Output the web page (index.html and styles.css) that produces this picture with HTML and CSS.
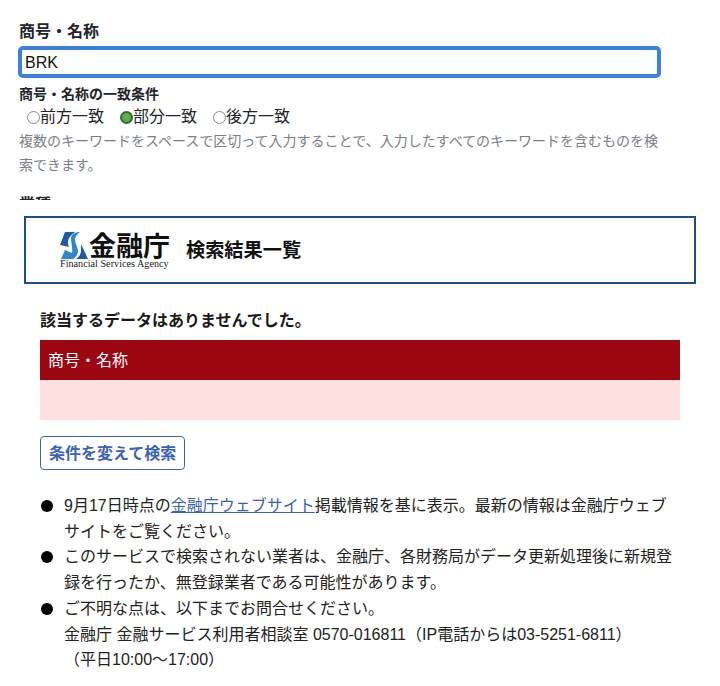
FILE: index.html
```html
<!DOCTYPE html>
<html lang="ja">
<head>
<meta charset="utf-8">
<title>検索結果一覧</title>
<link rel="stylesheet" href="styles.css">
</head>
<body>
<section class="search">
  <label class="field-label" for="name">商号・名称</label>
  <input class="field-input" id="name" type="text" value="BRK">
  <div class="match-label">商号・名称の一致条件</div>
  <div class="radios">
    <label class="radio"><input type="radio" name="m">前方一致</label>
    <label class="radio"><input type="radio" name="m" checked>部分一致</label>
    <label class="radio"><input type="radio" name="m">後方一致</label>
  </div>
  <p class="hint">複数のキーワードをスペースで区切って入力することで、入力したすべてのキーワードを含むものを検索できます。</p>
  <div class="next-label">業種</div>
</section>
<main class="results">
  <header class="brand">
    <div class="logo">
      <div class="logo-top">
        <svg class="mark" viewBox="0 0 28 27" aria-hidden="true">
          <path fill="#1d5aa8" d="M5 0H15C11 3 8 6 8 10C8 12 8.500 14 9 15L0 13Z"/>
          <path fill="#2f86c8" d="M11 6C11 3 14 1 18 0H20C16 3 15 6 15 8C15 12 18 15 18 19C18 22 16 25 13 27H1L5 18L12 21C13 17 11 11 11 6Z"/>
          <path fill="#1d5aa8" d="M21 12L28 27H16C19 25 21 22 21 19Z"/>
        </svg>
        <span class="logo-kanji">金融庁</span>
      </div>
      <div class="logo-en">Financial Services Agency</div>
    </div>
    <h1 class="title">検索結果一覧</h1>
  </header>
  <div class="body">
    <p class="notice">該当するデータはありませんでした。</p>
    <table class="table">
      <thead><tr><th>商号・名称</th></tr></thead>
      <tbody><tr><td></td></tr></tbody>
    </table>
    <button class="back" type="button">条件を変えて検索</button>
    <ul class="notes">
      <li><span>9月17日時点の<a href="#">金融庁ウェブサイト</a>掲載情報を基に表示。最新の情報は金融庁ウェブサイトをご覧ください。</span></li>
      <li><span>このサービスで検索されない業者は、金融庁、各財務局がデータ更新処理後に新規登録を行ったか、無登録業者である可能性があります。</span></li>
      <li><span>ご不明な点は、以下までお問合せください。<br>金融庁 金融サービス利用者相談室 0570-016811（IP電話からは03-5251-6811）<br>（平日10:00～17:00）</span></li>
    </ul>
  </div>
</main>
</body>
</html>
```
FILE: styles.css
```css
* { box-sizing: border-box; }
html, body { margin: 0; background: #fff; }
body {
  font-family: "Liberation Sans", "Noto Sans CJK JP", sans-serif;
  font-size: 16px;
  color: #1a1a1a;
}
.search {
  height: 200px;
  overflow: hidden;
  padding: 22px 60px 0 19px;
}
.field-label {
  display: block;
  font-weight: 700;
  line-height: 20px;
  color: #212529;
}
.field-input {
  display: block;
  width: 643px;
  height: 32px;
  margin: 4px 0 0 -1px;
  padding: 2px 3px 0;
  border: 4px solid #3b7fe3;
  border-radius: 5px;
  font: 16px "Liberation Sans", sans-serif;
  color: #111;
  outline: none;
}
.match-label {
  margin-top: 7px;
  font-size: 14px;
  font-weight: 700;
  line-height: 18px;
  color: #212529;
}
.radios {
  display: flex;
  gap: 16px;
  margin-top: 2px;
  padding-left: 8px;
  line-height: 24px;
}
.radio { display: flex; align-items: center; color: #212529; }
.radio input {
  appearance: none;
  width: 13px;
  height: 13px;
  margin: 0;
  border: 1px solid #8a8a8a;
  border-radius: 50%;
  background: #fff;
}
.radio input:checked {
  border: 2px solid #2e6b2e;
  background: #5cb04a;
}
.hint {
  margin: 0;
  font-size: 14px;
  line-height: 24px;
  color: #7a8087;
}
.next-label {
  margin-top: 18px;
  font-weight: 700;
  line-height: 20px;
  color: #212529;
}
.results { padding: 16px 24px 0; }
.brand {
  display: flex;
  align-items: center;
  height: 68px;
  padding-left: 34px;
  border: 2px solid #1f4e86;
}
.logo { width: 112px; }
.logo-top { display: flex; align-items: center; height: 28px; }
.mark { width: 28px; height: 27px; flex: none; }
.logo-kanji {
  margin-left: 1px;
  font-family: "Noto Sans CJK JP", sans-serif;
  font-size: 27px;
  font-weight: 700;
  line-height: 28px;
  color: #111;
  white-space: nowrap;
}
.logo-en {
  font-family: "Liberation Serif", serif;
  font-size: 10.200px;
  line-height: 10px;
  color: #222;
  white-space: nowrap;
}
.title {
  margin: 2px 0 0 14px;
  font-size: 19.200px;
  font-weight: 700;
  line-height: 28px;
  color: #111;
}
.body { padding: 25px 16px 0; }
.notice {
  margin: 0;
  font-weight: 700;
  line-height: 24px;
  color: #1a1a1a;
}
.table {
  width: 100%;
  margin-top: 7px;
  border-collapse: collapse;
}
.table th {
  height: 40px;
  padding: 0 8px 2px;
  background: #9b0610;
  color: #fff;
  font-weight: 400;
  text-align: left;
}
.table td { height: 40px; padding: 0; background: #fde0df; }
.back {
  display: block;
  height: 34px;
  margin-top: 16px;
  padding: 0 8px 2px;
  border: 1px solid #3f66a0;
  border-radius: 4px;
  background: #fff;
  color: #3a62b8;
  font: 700 16px "Liberation Sans", "Noto Sans CJK JP", sans-serif;
}
.notes {
  margin: 23px 0 0;
  padding: 0;
  list-style: none;
  font-size: 16px;
  line-height: 25.700px;
  color: #222;
}
.notes li { display: flex; }
.notes li::before {
  content: "";
  flex: none;
  width: 12px;
  height: 12px;
  margin: 7px 11px 0 1px;
  border-radius: 50%;
  background: #000;
}
.notes span { width: 616px; }
.notes a { color: #3a62b8; }
```
